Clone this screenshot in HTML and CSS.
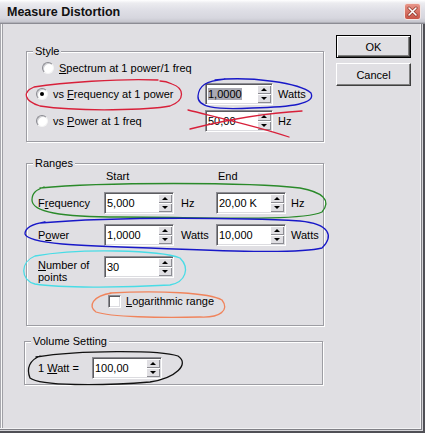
FILE: index.html
```html
<!DOCTYPE html>
<html lang="en">
<head>
<meta charset="UTF-8" />
<title>Measure Distortion</title>
<link rel="stylesheet" href="styles.css">
</head>
<body>
<div class="window">
  <div class="titlebar">
    <span class="title">Measure Distortion</span>
    <span class="close">
      <svg width="11" height="11" viewBox="0 0 11 11"><path d="M2 2 L9 9 M9 2 L2 9" stroke="#8a3428" stroke-width="3" stroke-linecap="round"/><path d="M2 2 L9 9 M9 2 L2 9" stroke="#fff" stroke-width="1.6" stroke-linecap="round"/></svg>
    </span>
  </div>

  <div class="client">
    <div class="groups">
      <fieldset class="group style">
        <legend>Style</legend>
        <div class="style-grid">
          <label class="radio indent"><span class="dot"></span><span><u>S</u>pectrum at 1 power/1 freq</span></label>
          <label class="radio"><span class="dot on"></span><span>vs <u>F</u>requency at 1 power</span></label>
          <div class="edit"><span class="val"><span class="sel">1,0000</span></span><span class="spin"><i class="up"></i><i class="down"></i></span></div>
          <span class="unit">Watts</span>
          <label class="radio"><span class="dot"></span><span>vs <u>P</u>ower at 1 freq</span></label>
          <div class="edit"><span class="val">50,00</span><span class="spin"><i class="up"></i><i class="down"></i></span></div>
          <span class="unit">Hz</span>
        </div>
      </fieldset>

      <fieldset class="group ranges">
        <legend>Ranges</legend>
        <div class="ranges-body">
          <div class="ranges-grid">
            <span></span>
            <span class="head">Start</span>
            <span></span>
            <span class="head">End</span>
            <span></span>

            <span>F<u>r</u>equency</span>
            <div class="edit"><span class="val">5,000</span><span class="spin"><i class="up"></i><i class="down"></i></span></div>
            <span class="unit mid">Hz</span>
            <div class="edit"><span class="val">20,00 K</span><span class="spin"><i class="up"></i><i class="down"></i></span></div>
            <span class="unit">Hz</span>

            <span>P<u>o</u>wer</span>
            <div class="edit"><span class="val">1,0000</span><span class="spin"><i class="up"></i><i class="down"></i></span></div>
            <span class="unit mid">Watts</span>
            <div class="edit"><span class="val">10,000</span><span class="spin"><i class="up"></i><i class="down"></i></span></div>
            <span class="unit">Watts</span>

            <span class="points"><u>N</u>umber of<br>points</span>
            <div class="edit"><span class="val">30</span><span class="spin"><i class="up"></i><i class="down"></i></span></div>
          </div>
          <label class="check-row"><span class="box"></span><span><u>L</u>ogarithmic range</span></label>
        </div>
      </fieldset>

      <fieldset class="group volume">
        <legend>Volume Setting</legend>
        <div class="volume-row">
          <span class="label">1 <u>W</u>att =</span>
          <div class="edit"><span class="val">100,00</span><span class="spin"><i class="up"></i><i class="down"></i></span></div>
        </div>
      </fieldset>
    </div>

    <div class="buttons">
      <button class="btn default">OK</button>
      <button class="btn">Cancel</button>
    </div>
  </div>

  <!-- hand drawn marks on top of the dialog -->
  <svg class="marks" width="425" height="433" viewBox="0 0 425 433">
    <path class="red" d="M158,80 C120,78 60,83 34,87 C22,92 24,101 40,106 C80,112 150,110 170,106 C186,100 184,88 172,84 C168,82 164,81 160,81"/>
    <path class="blue" d="M215,80 C250,76 300,83 311,93 C316,104 292,107 252,108 C214,110 197,107 198,96 C199,86 205,81 225,79"/>
    <path class="red" d="M188,110 C220,118 260,127 289,137 M190,129 C230,119 266,113 302,111"/>
    <path class="green" d="M40,188 C100,182 250,182 300,188 C322,192 332,200 322,212 C300,222 200,217 120,217 C60,217 32,212 32,200 C32,193 36,190 44,187"/>
    <path class="blue" d="M40,223 C120,216 250,218 300,221 C330,224 334,236 322,248 C300,254 220,251 150,248 C80,246 28,244 25,234 C25,228 32,224 45,222"/>
    <path class="cyan" d="M35,256 C80,248 160,250 180,258 C190,268 186,282 170,285 C120,288 60,288 35,284 C20,280 20,262 35,256 Z"/>
    <path class="orange" d="M110,293 C160,290 210,293 222,300 C230,310 220,318 200,317 C160,318 110,317 96,312 C88,306 92,296 112,293"/>
    <path class="black" d="M36,357 C80,350 160,350 178,356 C190,364 176,378 150,382 C100,386 40,386 30,378 C26,368 30,360 40,356"/>
  </svg>
</div>
</body>
</html>
```

FILE: styles.css
```css
body {
  margin: 0;
  font-family: "Liberation Sans", Arial, sans-serif;
  font-size: 11px;
  color: #000;
  background: #e0dfe3;
}
.window {
  position: relative;
  width: 425px;
  height: 433px;
  box-sizing: border-box;
  background: #e0dfe3;
  box-shadow:
    inset -1px -1px 0 #505056,
    inset -2px -2px 0 #505056,
    inset -3px -3px 0 #d4d4d8,
    inset -4px -4px 0 #808086,
    inset -5px -5px 0 #f2f2f4,
    inset 1px 1px 0 #a8a8ae,
    inset 2px 2px 0 #f8f8f8,
    inset 3px 3px 0 #a0a0a6;
}
.titlebar {
  height: 24px;
  box-sizing: border-box;
  display: flex;
  align-items: center;
  justify-content: space-between;
  padding: 0 4px 0 7px;
  background: linear-gradient(to bottom, #ffffff 0, #ececf0 3px, #dfdfe6 10px, #d6d6de 18px, #c6c6ce 22px, #9a9aa2 23px);
  border-bottom: 1px solid #8c8c94;
}
.title {
  font-weight: bold;
  font-size: 12.5px;
  color: #111;
}
.close {
  width: 17px;
  height: 17px;
  box-sizing: border-box;
  border: 1px solid #f2e4e2;
  border-radius: 3px;
  background: linear-gradient(to bottom, #e8968a, #c85446);
  display: flex;
  align-items: center;
  justify-content: center;
}
.client {
  display: grid;
  grid-template-columns: 298px 75px;
  column-gap: 12px;
  align-items: start;
  padding: 11px 0 0 26px;
}
.groups {
  margin-top: 10px;
  display: flex;
  flex-direction: column;
}
.group {
  margin: 0;
  padding: 0;
  min-width: 0;
  box-sizing: border-box;
  border: 1px solid #9d9da3;
  box-shadow: 1px 1px 0 #fff, inset 1px 1px 0 #fff;
}
.group legend {
  margin-left: 6px;
  padding: 0 2px;
  line-height: 13px;
  background: #e0dfe3;
}
.style {
  height: 97px;
}
.ranges {
  height: 169px;
  margin-top: 15px;
}
.volume {
  height: 50px;
  width: 299px;
  margin-top: 9px;
  margin-left: -2px;
}

/* style group */
.style-grid {
  display: grid;
  grid-template-columns: 169px 68px auto;
  grid-template-rows: 20px 22px 22px;
  row-gap: 5px;
  align-items: center;
  padding-left: 9px;
}
.radio {
  display: flex;
  align-items: center;
  gap: 5px;
  white-space: nowrap;
}
.radio.indent {
  grid-column: 1 / -1;
  margin-left: 6px;
}
.dot {
  position: relative;
  width: 12px;
  height: 12px;
  box-sizing: border-box;
  border-radius: 50%;
  background: #fff;
  border: 1px solid;
  border-color: #8a8a90 #f4f4f4 #f4f4f4 #8a8a90;
  box-shadow: inset 1px 1px 0 #cfcfd3;
}
.dot.on::after {
  content: "";
  position: absolute;
  left: 3px;
  top: 3px;
  width: 4px;
  height: 4px;
  border-radius: 50%;
  background: #000;
}
.unit {
  padding-left: 5px;
  white-space: nowrap;
}

/* spin edit */
.edit {
  display: flex;
  height: 22px;
  box-sizing: border-box;
  padding: 1px;
  background: #fff;
  border: 1px solid;
  border-color: #8c8c92 #fff #fff #8c8c92;
  box-shadow: inset 1px 1px 0 #5c5c60, inset -1px -1px 0 #dcdce0;
}
.val {
  flex: 1;
  padding-left: 1px;
  line-height: 18px;
  white-space: nowrap;
  overflow: hidden;
}
.sel {
  background: #a9a9b3;
}
.spin {
  width: 14px;
  display: flex;
  flex-direction: column;
}
.spin i {
  flex: 1;
  display: flex;
  align-items: center;
  justify-content: center;
  background: #e0dfe3;
  box-shadow: inset 1px 1px 0 #fff, inset -1px -1px 0 #8c8c92;
}
.spin i::after {
  content: "";
  border-left: 3px solid transparent;
  border-right: 3px solid transparent;
}
.spin .up::after {
  border-bottom: 3px solid #000;
}
.spin .down::after {
  border-top: 3px solid #000;
}

/* ranges group */
.ranges-body {
  padding-left: 11px;
}
.ranges-grid {
  display: grid;
  grid-template-columns: 66px 70px 42px 70px auto;
  grid-template-rows: 12px 22px 22px 22px;
  row-gap: 10px;
  align-items: center;
}
.head {
  line-height: 13px;
  padding-left: 2px;
}
.unit.mid {
  padding-left: 7px;
}
.points {
  align-self: start;
  margin-top: 3px;
  line-height: 12px;
}
.check-row {
  display: flex;
  align-items: center;
  gap: 5px;
  margin: 17px 0 0 70px;
  line-height: 13px;
}
.box {
  width: 13px;
  height: 13px;
  box-sizing: border-box;
  background: #fff;
  border: 1px solid;
  border-color: #8c8c92 #fff #fff #8c8c92;
  box-shadow: inset 1px 1px 0 #5c5c60, inset -1px -1px 0 #dcdce0;
}

/* volume group */
.volume-row {
  display: flex;
  align-items: center;
  padding: 9px 0 0 13px;
}
.volume-row .label {
  width: 54px;
}
.volume-row .edit {
  width: 70px;
}

/* buttons */
.buttons {
  display: flex;
  flex-direction: column;
  gap: 5px;
}
.btn {
  width: 75px;
  height: 23px;
  padding: 0;
  font: inherit;
  color: #000;
  background: #e0dfe3;
  border: 1px solid;
  border-color: #fff #404040 #404040 #fff;
  box-shadow: inset -1px -1px 0 #808080;
}
.btn.default {
  border-color: #000;
  box-shadow: inset 1px 1px 0 #fff, inset -1px -1px 0 #404040, inset -2px -2px 0 #808080;
}

/* annotation overlay */
.marks {
  position: absolute;
  left: 0;
  top: 0;
  pointer-events: none;
}
.marks path {
  fill: none;
  stroke-width: 1.3;
  stroke-linecap: round;
}
.marks .red { stroke: #d8203a; }
.marks .blue { stroke: #1818c8; }
.marks .green { stroke: #2a8a2a; }
.marks .cyan { stroke: #48dce6; }
.marks .orange { stroke: #f0845c; }
.marks .black { stroke: #111; }
```
